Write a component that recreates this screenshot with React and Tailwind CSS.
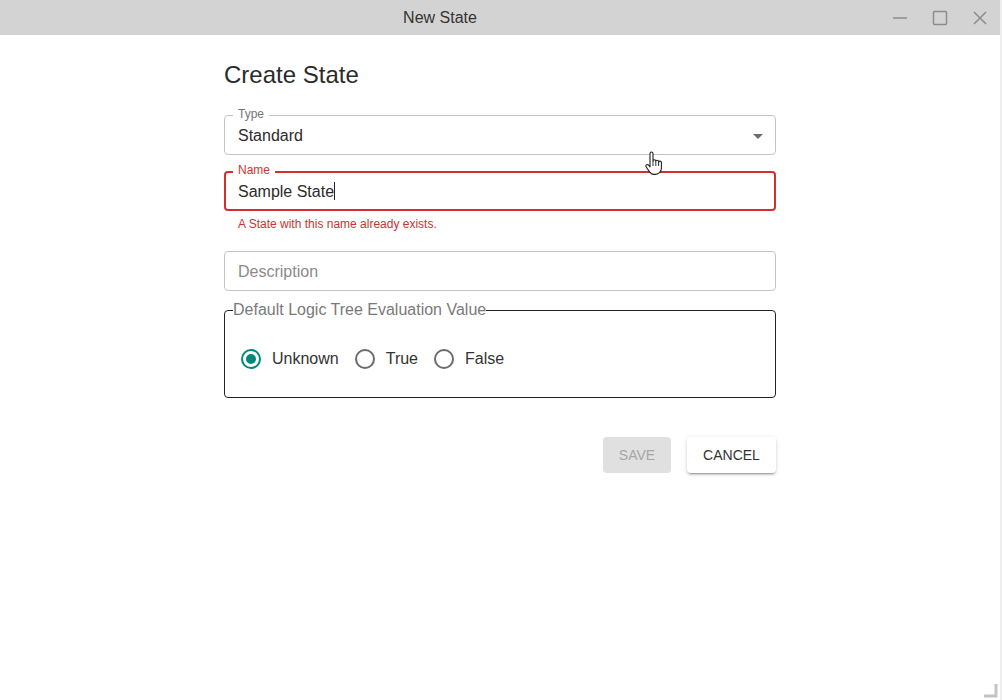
import React from "react";

const FONT = { fontFamily: '"Liberation Sans", Arial, sans-serif' };

function Radio({ checked, label }) {
  return (
    <label className="flex items-center mr-[5px]">
      <span className="w-[42px] h-[42px] flex items-center justify-center">
        <svg width="24" height="24" viewBox="0 0 24 24">
          <circle
            cx="12"
            cy="12"
            r="9"
            fill="none"
            stroke={checked ? "#00897b" : "#6b6b6b"}
            strokeWidth="2"
          />
          {checked && <circle cx="12" cy="12" r="5" fill="#00897b" />}
        </svg>
      </span>
      <span className="text-[16px] text-[#333]">{label}</span>
    </label>
  );
}

function Field({ label, value, error, placeholder, select, cursor }) {
  const borderCls = error
    ? "border-2 border-[#d32f2f]"
    : "border border-[#c4c4c4]";
  return (
    <div className={`relative h-[40px] rounded-[4px] ${borderCls}`}>
      {label && (
        <span
          className={`absolute top-[-9px] px-[5px] bg-white text-[12px] leading-[14px] ${
            error ? "text-[#d32f2f] top-[-10px] left-[7px]" : "text-[#757575] left-[8px]"
          }`}
        >
          {label}
        </span>
      )}
      <div
        className={`h-full flex items-center pt-[1px] ${error ? "pl-[12px]" : "pl-[13px]"} pr-[14px] text-[16px]`}
      >
        {value ? (
          <span className="text-[#2b2b2b]">
            {value}
            {cursor && (
              <span className="inline-block w-px h-[18px] bg-[#222] align-[-3px]" />
            )}
          </span>
        ) : (
          <span className="text-[#8a8a8a]">{placeholder}</span>
        )}
        {select && (
          <svg className="ml-auto mr-[-9px]" width="24" height="24" viewBox="0 0 24 24">
            <path d="M7 10l5 5 5-5z" fill="#6b6b6b" />
          </svg>
        )}
      </div>
    </div>
  );
}

export default function App() {
  return (
    <div
      className="relative w-[1002px] h-[700px] bg-white flex flex-col overflow-hidden"
      style={FONT}
    >
      {/* title bar */}
      <div className="h-[35px] bg-[#d3d3d3] flex items-center shrink-0">
        <div className="w-[880px] text-center text-[16px] text-[#333]">New State</div>
        <div className="flex items-center gap-[24px] ml-[12px]">
          <svg width="16" height="16" viewBox="0 0 16 16">
            <path d="M1 8h14" stroke="#8c8c8c" strokeWidth="1.5" />
          </svg>
          <svg width="16" height="16" viewBox="0 0 16 16">
            <rect x="1.5" y="1.5" width="13" height="13" rx="1" fill="none" stroke="#8c8c8c" strokeWidth="1.5" />
          </svg>
          <svg width="16" height="16" viewBox="0 0 16 16">
            <path d="M2 2l12 12M14 2L2 14" stroke="#8c8c8c" strokeWidth="1.5" />
          </svg>
        </div>
      </div>

      {/* form */}
      <div className="ml-[224px] w-[552px] pt-[24px]">
        <h1 className="text-[24px] leading-[32px] text-[#2b2b2b]">Create State</h1>

        <div className="mt-[24px]">
          <Field label="Type" value="Standard" select />
        </div>

        <div className="mt-[16px]">
          <Field label="Name" value="Sample State" error cursor />
          <p className="mt-[6px] ml-[14px] text-[12px] leading-[14px] text-[#d32f2f]">
            A State with this name already exists.
          </p>
        </div>

        <div className="mt-[20px]">
          <Field placeholder="Description" />
        </div>

        <fieldset className="mt-[10px] border border-[#222] rounded-[4px] px-[8px] pb-[17px] pt-[19px]">
          <legend className="text-[16px] leading-[18px] text-[#7a7a7a]">
            Default Logic Tree Evaluation Value
          </legend>
          <div className="flex items-center ml-[-3px]">
            <Radio checked label="Unknown" />
            <Radio label="True" />
            <Radio label="False" />
          </div>
        </fieldset>

        <div className="flex justify-end gap-[16px] mt-[39px]">
          <button className="w-[68px] h-[36px] rounded-[4px] bg-[#e0e0e0] text-[14px] text-[#a6a6a6] uppercase">
            Save
          </button>
          <button className="w-[89px] h-[36px] rounded-[4px] bg-white text-[14px] text-[#333] uppercase shadow-[0_3px_1px_-2px_rgba(0,0,0,0.2),0_2px_2px_0_rgba(0,0,0,0.14),0_1px_5px_0_rgba(0,0,0,0.12)]">
            Cancel
          </button>
        </div>
      </div>

      {/* hand cursor */}
      <svg className="absolute left-[644px] top-[151px]" width="20" height="26" viewBox="0 0 20 26">
        <path
          d="M6 2.5c0-1 .7-1.5 1.5-1.5S9 1.5 9 2.5V10c0-.8.7-1.3 1.4-1.3s1.4.5 1.4 1.3v.6c0-.8.7-1.3 1.4-1.3s1.4.5 1.4 1.3v.8c0-.8.7-1.3 1.4-1.3s1.4.5 1.4 1.3v5.5c0 3.5-2.3 6.5-6 6.5H10c-2 0-3.2-.8-4.3-2.3L2.2 16c-.6-.8-.4-1.8.4-2.2.7-.4 1.6-.2 2.2.5L6 15.8z"
          fill="#fff"
          stroke="#222"
          strokeWidth="1.1"
          strokeLinejoin="round"
        />
        <path d="M9 10v5M11.8 11v4M14.6 11.5v3.5" stroke="#222" strokeWidth="0.9" />
      </svg>

      {/* right edge and resize grip */}
      <div className="absolute right-0 top-0 w-[2px] h-full bg-[#eeeeee]" />
      <svg className="absolute right-[4px] bottom-[2px]" width="16" height="16" viewBox="0 0 16 16">
        <path d="M14 2v12H2" fill="none" stroke="#c4c4c4" strokeWidth="3" />
      </svg>
    </div>
  );
}
